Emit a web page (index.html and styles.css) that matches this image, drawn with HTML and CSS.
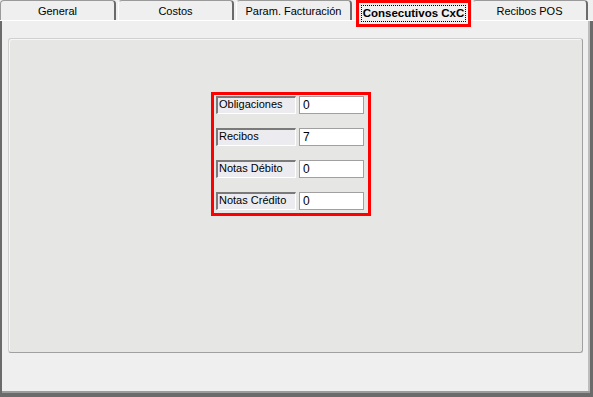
FILE: index.html
```html
<!DOCTYPE html>
<html lang="es">
<head>
  <meta charset="UTF-8" />
  <title>Consecutivos CxC</title>
  <link rel="stylesheet" href="styles.css">
</head>
<body>

  <!-- Tabs -->
  <div class="tabs">
    <div class="tab">General</div>
    <div class="tab">Costos</div>
    <div class="tab">Param. Facturación</div>
    <div class="tab active"><span class="focus">Consecutivos CxC</span></div>
    <div class="tab">Recibos POS</div>
  </div>

  <!-- Page -->
  <div class="page">
    <div class="group">
      <div class="fields">
        <div class="row">
          <div class="label">Obligaciones</div>
          <div class="input">0</div>
        </div>
        <div class="row">
          <div class="label">Recibos</div>
          <div class="input">7</div>
        </div>
        <div class="row">
          <div class="label">Notas Débito</div>
          <div class="input">0</div>
        </div>
        <div class="row">
          <div class="label">Notas Crédito</div>
          <div class="input">0</div>
        </div>
      </div>
    </div>
  </div>

</body>
</html>
```

FILE: styles.css
```css
html, body {
  margin: 0;
  padding: 0;
}

body {
  width: 593px;
  height: 397px;
  background: #efefef;
  font-family: 'Liberation Sans', Arial, sans-serif;
  font-size: 11px;
  color: #000;
  display: flex;
  flex-direction: column;
  overflow: hidden;
}

.tabs {
  display: flex;
  gap: 2px;
  height: 20px;
  padding-right: 5px;
  border-bottom: 1px solid #fff;
  position: relative;
}

.tab {
  width: 116px;
  height: 20px;
  box-sizing: border-box;
  border-top: 1px solid #9a9a9a;
  border-left: 1px solid #fff;
  border-right: 2px solid #6b6b6b;
  border-radius: 4px 4px 0 0;
  background: #efefef;
  display: flex;
  align-items: center;
  justify-content: center;
  padding-top: 1px;
  white-space: nowrap;
}

.tab:first-child {
  border-left: 1px solid #9a9a9a;
}

.tab.active {
  width: 115px;
  height: 27px;
  margin-left: 2px;
  margin-right: -1px;
  border: 3px solid #ff0000;
  border-radius: 0;
  background: #f1f1f1;
  font-weight: bold;
  font-size: 11.5px;
  z-index: 1;
  align-items: flex-start;
  padding-top: 2px;
}

.focus {
  border: 1px dotted #000;
  padding: 0 1px;
  line-height: 15px;
}

.page {
  flex: 1;
  border-left: 2px solid #6b6b6b;
  border-right: 3px solid #6b6b6b;
  border-bottom: 4px solid #6b6b6b;
  box-shadow: inset 0 -2px 0 #9c9c9c, inset -2px 0 0 #bdbdbd;
  padding: 17px 7px 40px 6px;
  display: flex;
}

.group {
  flex: 1;
  background: #e6e7e4;
  border: 1px solid #a0a0a0;
  border-top-color: #d0d0d0;
  border-left-color: #d0d0d0;
  border-radius: 3px;
  box-shadow: inset 1px 1px 0 #f6f6f6;
  display: flex;
  justify-content: flex-start;
  align-items: flex-start;
  padding: 53px 0 0 202px;
}

.fields {
  display: flex;
  flex-direction: column;
  gap: 14px;
  border: 3px solid #ff0000;
  padding: 1px 4px 3px 2px;
}

.row {
  display: flex;
  gap: 3px;
  height: 18px;
}

.label {
  width: 80px;
  box-sizing: border-box;
  background: #ececf0;
  border-top: 2px solid #7a7a7a;
  border-left: 2px solid #7a7a7a;
  border-right: 1px solid #fff;
  border-bottom: 1px solid #fff;
  line-height: 13px;
  padding-left: 1px;
}

.input {
  width: 65px;
  box-sizing: border-box;
  background: #fff;
  border: 1px solid #a0a0a0;
  line-height: 16px;
  padding-left: 3px;
  font-size: 12px;
}
```
